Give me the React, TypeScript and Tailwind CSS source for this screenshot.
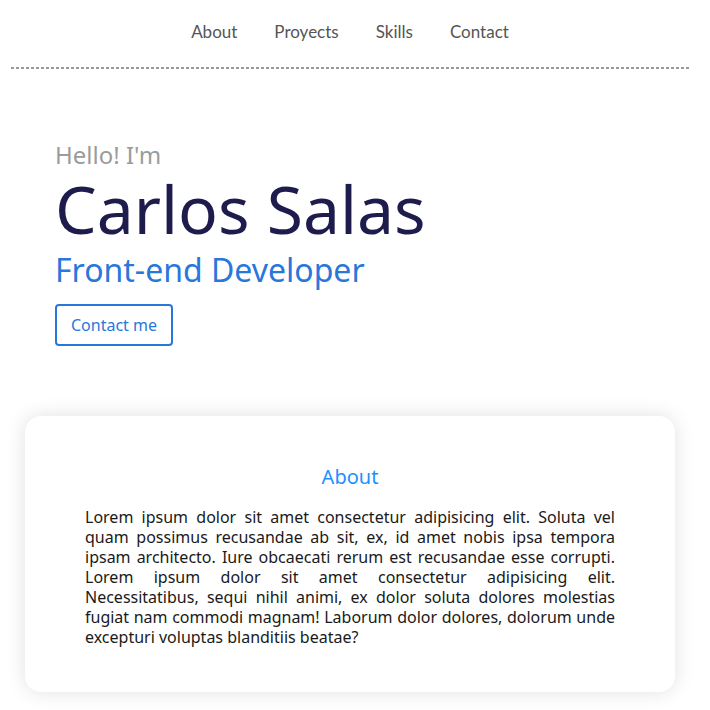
import React from "react";

export default function App() {
  const font = { fontFamily: "'Noto Sans', sans-serif" };
  return (
    <div className="min-h-[710px] w-[700px] bg-white" style={font}>
      <nav className="flex h-[67px] items-center justify-center gap-[37px] pb-[4px] text-[17px] text-[#555555]" style={{ fontFamily: "Lato, sans-serif" }}>
        <span>About</span>
        <span>Proyects</span>
        <span>Skills</span>
        <span>Contact</span>
      </nav>
      <div className="mx-[11px] h-[2px] bg-[repeating-linear-gradient(to_right,#9a9a9a_0px,#9a9a9a_3px,transparent_3px,transparent_5px)]" />
      <section className="flex flex-col items-start pl-[55px] pt-[72px]">
        <p className="text-[24px] leading-[28px] text-[#9b9b9b]">Hello! I'm</p>
        <h1 className="mt-[6px] text-[66px] leading-[66px] text-[#1d1c4d]">Carlos Salas</h1>
        <h2 className="mt-[11px] text-[32px] leading-[36px] text-[#2a77dc]">Front-end Developer</h2>
        <button className="mt-[16px] h-[42px] w-[118px] rounded-[4px] border-2 border-[#2a77dc] text-[16px] text-[#2a77dc]">
          Contact me
        </button>
      </section>
      <div className="mx-[25px] mt-[70px] rounded-[16px] bg-white px-[60px] pb-[45px] pt-[49px] shadow-[0_0_20px_rgba(0,0,0,0.12)]">
        <h3 className="text-center text-[20px] leading-[24px] text-[#1e8fff]">About</h3>
        <p className="mt-[18px] text-justify text-[16px] leading-[20px] text-[#1a1a1a]">
          Lorem ipsum dolor sit amet consectetur adipisicing elit. Soluta vel quam possimus recusandae ab sit, ex, id amet nobis ipsa tempora ipsam architecto. Iure obcaecati rerum est recusandae esse corrupti. Lorem ipsum dolor sit amet consectetur adipisicing elit. Necessitatibus, sequi nihil animi, ex dolor soluta dolores molestias fugiat nam commodi magnam! Laborum dolor dolores, dolorum unde excepturi voluptas blanditiis beatae?
        </p>
      </div>
    </div>
  );
}
